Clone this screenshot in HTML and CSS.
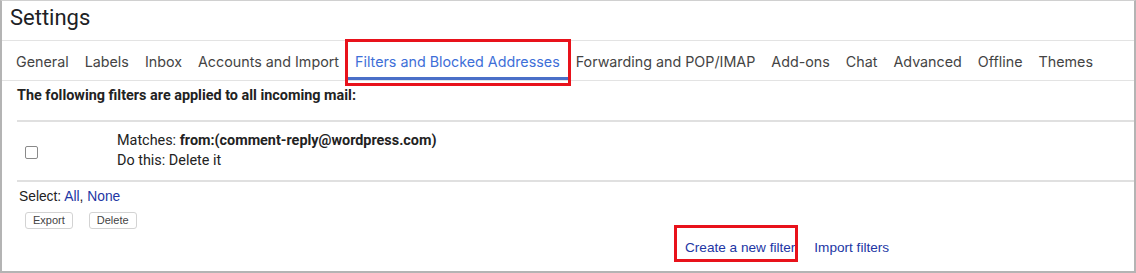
FILE: index.html
```html
<!DOCTYPE html>
<html>
<head>
<meta charset="utf-8">
<link rel="stylesheet" href="styles.css">
</head>
<body>
<div class="frame">
  <div class="header">Settings</div>
  <nav class="tabs">
    <span class="tab">General</span>
    <span class="tab">Labels</span>
    <span class="tab">Inbox</span>
    <span class="tab">Accounts and Import</span>
    <span class="tab active">Filters and Blocked Addresses</span>
    <span class="tab">Forwarding and POP/IMAP</span>
    <span class="tab">Add-ons</span>
    <span class="tab">Chat</span>
    <span class="tab">Advanced</span>
    <span class="tab">Offline</span>
    <span class="tab">Themes</span>
  </nav>
  <div class="content">
    <div class="intro">The following filters are applied to all incoming mail:</div>
    <div class="filter-row">
      <div class="check-col"><span class="checkbox"></span></div>
      <div class="filter-text">
        <div>Matches: <b>from:(comment-reply@wordpress.com)</b></div>
        <div>Do this: Delete it</div>
      </div>
    </div>
    <div class="select">Select: <a class="link">All</a>, <a class="link">None</a></div>
    <div class="buttons">
      <span class="btn">Export</span>
      <span class="btn">Delete</span>
    </div>
    <div class="actions">
      <a class="link action highlight">Create a new filter</a>
      <a class="link action">Import filters</a>
    </div>
  </div>
</div>
</body>
</html>
```
FILE: styles.css
```css
html, body {
  margin: 0;
  padding: 0;
  background: #fff;
}
.frame {
  box-sizing: border-box;
  width: 1136px;
  height: 273px;
  border: 2px solid #b4b4b4;
  border-top: 1px solid #d0d0d0;
  font-family: Roboto, "Liberation Sans", sans-serif;
  color: #222;
  overflow: hidden;
}
.header {
  height: 40px;
  box-sizing: border-box;
  padding: 3px 0 0 8px;
  font-size: 22px;
  line-height: 28px;
  color: #202124;
  border-bottom: 1px solid #e3e3e3;
}
.tabs {
  display: flex;
  height: 40px;
  box-sizing: border-box;
  padding-left: 6px;
  border-bottom: 1px solid #e3e3e3;
  font-family: Inter, Roboto, sans-serif;
  font-size: 14.3px;
}
.tab {
  position: relative;
  display: flex;
  align-items: center;
  padding: 1px 8px 0;
  color: #444;
  white-space: nowrap;
}
.tab.active {
  color: #3e6fd8;
}
.tab.active::before {
  content: "";
  position: absolute;
  left: 0;
  right: 0;
  bottom: 0;
  height: 3px;
  background: #4a6fc8;
}
.tab.active::after {
  content: "";
  position: absolute;
  left: -2px;
  right: -3px;
  top: -2px;
  bottom: -6px;
  border: 3px solid #e8121b;
}
.content {
  padding-left: 15px;
}
.intro {
  height: 39px;
  box-sizing: border-box;
  padding-top: 6px;
  font-size: 14.4px;
  font-weight: bold;
  color: #222;
}
.filter-row {
  display: flex;
  align-items: center;
  height: 62px;
  box-sizing: border-box;
  border-top: 2px solid #e0e0e0;
  border-bottom: 2px solid #e0e0e0;
}
.check-col {
  width: 100px;
  display: flex;
  padding-left: 8px;
  box-sizing: border-box;
  padding-top: 2px;
}
.checkbox {
  width: 11px;
  height: 11px;
  border: 1px solid #8a8a8a;
  border-radius: 2px;
  background: #fff;
}
.filter-text {
  font-size: 14.4px;
  line-height: 20px;
  color: #222;
}
.filter-text b {
  font-weight: bold;
}
.select {
  padding: 6px 0 0 2px;
  font-family: "Liberation Sans", Arial, sans-serif;
  font-size: 13.8px;
  line-height: 18px;
  color: #222;
}
.link {
  color: #2236a4;
  text-decoration: none;
}
.buttons {
  display: flex;
  gap: 16px;
  padding: 6px 0 0 8px;
}
.btn {
  display: inline-block;
  height: 17px;
  box-sizing: border-box;
  padding: 0 7px;
  border: 1px solid #d3d3d3;
  border-radius: 3px;
  font-family: "Liberation Sans", Arial, sans-serif;
  font-size: 11px;
  line-height: 15px;
  color: #444;
  background: #fff;
}
.actions {
  display: flex;
  gap: 19px;
  padding: 10px 0 0 668px;
  font-family: "Liberation Sans", Arial, sans-serif;
  font-size: 13.6px;
  line-height: 17px;
}
.action {
  position: relative;
}
.action.highlight::after {
  content: "";
  position: absolute;
  left: -11px;
  right: -3px;
  top: -14px;
  bottom: -6px;
  border: 3px solid #e8121b;
}
```
